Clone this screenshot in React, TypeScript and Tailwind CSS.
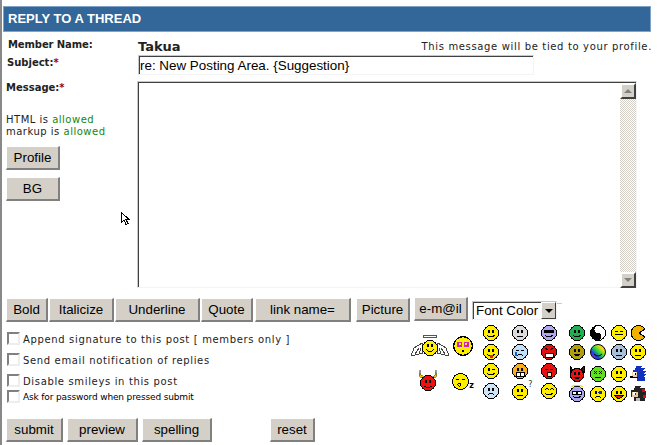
import type { ReactNode } from "react"

const btn =
  "h-[24px] flex items-center justify-center bg-[#d4d0c8] border-t border-l border-r-2 border-b-2 border-t-white border-l-white border-r-[#808080] border-b-[#808080] text-[13.33px] text-black font-['Liberation_Sans',sans-serif]"

const label = "text-[10px] font-bold text-[#222] font-['DejaVu_Sans',sans-serif] leading-[14px]"
const small = "text-[10px] tracking-[0.5px] text-[#222] font-['DejaVu_Sans',sans-serif] leading-[12px]"
const inset =
  "bg-white border border-[#c8c8c8] border-r-[#f4f4f4] border-b-[#f4f4f4] shadow-[inset_1px_1px_0_#404040]"

function Face({ fill, size = 16, children }: { fill: string; size?: number; children?: ReactNode }) {
  return (
    <svg width={size} height={size} viewBox="0 0 16 16" shapeRendering="crispEdges" className="block">
      <circle cx="8" cy="8" r="7.5" fill={fill} stroke="#000" strokeWidth="1" />
      {children}
    </svg>
  )
}

const Eyes = () => (
  <>
    <rect x="5" y="5" width="2" height="3" fill="#000" />
    <rect x="9" y="5" width="2" height="3" fill="#000" />
  </>
)
const Smile = () => <path d="M4 10 Q8 14 12 10" fill="none" stroke="#000" />
const Flat = () => <rect x="5" y="11" width="6" height="1" fill="#000" />
const Frown = () => <path d="M5 12 Q8 9 11 12" fill="none" stroke="#000" />
const Closed = () => (
  <>
    <rect x="4" y="6" width="3" height="1" fill="#000" />
    <rect x="9" y="6" width="3" height="1" fill="#000" />
  </>
)

function Col({ children, className }: { children: ReactNode; className: string }) {
  return <div className={`flex flex-col items-center ${className}`}>{children}</div>
}

function Sonic() {
  return (
    <svg width="16" height="16" viewBox="0 0 16 16" shapeRendering="crispEdges" className="block">
      <path d="M6 0h6l-2 2h5l-2 3h3l-2 3h2l-2 3h1v4H7V11H3V4h2z" fill="#1030c0" />
      <rect x="2" y="6" width="5" height="5" fill="#f4d0a0" />
      <rect x="3" y="6" width="3" height="3" fill="#fff" />
      <rect x="5" y="7" width="1" height="2" fill="#000" />
      <rect x="0" y="10" width="3" height="2" fill="#000" />
      <rect x="3" y="11" width="5" height="1" fill="#000" />
    </svg>
  )
}

function Shadow() {
  return (
    <svg width="16" height="16" viewBox="0 0 16 16" shapeRendering="crispEdges" className="block">
      <path d="M5 0h6l-1 2h5l-1 3h2v5h-1v5H4v-4H1V4h3z" fill="#222" />
      <path d="M12 3h3v3h-3zM13 9h3v3h-3z" fill="#d01010" />
      <rect x="2" y="6" width="6" height="5" fill="#e8c8a0" />
      <rect x="3" y="6" width="3" height="3" fill="#fff" />
      <rect x="5" y="7" width="1" height="2" fill="#c00000" />
      <rect x="6" y="12" width="4" height="3" fill="#bbb" />
    </svg>
  )
}

function Angel() {
  return (
    <svg width="38" height="24" viewBox="0 0 38 24" shapeRendering="crispEdges" className="block">
      <ellipse cx="19" cy="2.5" rx="7" ry="1.5" fill="#fff" stroke="#555" />
      <path d="M11 9 L3 14 L0 22 L12 19 Z" fill="#fff" stroke="#444" />
      <path d="M27 9 L35 14 L38 22 L26 19 Z" fill="#fff" stroke="#444" />
      <path d="M4 20 L8 14 M8 20 L10 14 M34 20 L30 14 M30 20 L28 14" stroke="#444" />
      <circle cx="19" cy="14" r="7.5" fill="#ffee00" stroke="#000" />
      <rect x="16" y="10" width="2" height="3" fill="#000" />
      <rect x="20" y="10" width="2" height="3" fill="#000" />
      <path d="M15 15 Q19 20 23 15" fill="none" stroke="#000" />
    </svg>
  )
}

function Devil() {
  return (
    <svg width="20" height="22" viewBox="0 0 20 22" shapeRendering="crispEdges" className="block">
      <path d="M2 0 L1 6 L5 9 L6 7 L3 5 Z M18 0 L19 6 L15 9 L14 7 L17 5 Z" fill="#e8c800" stroke="#333" strokeWidth="0.5" />
      <circle cx="10" cy="13" r="7.5" fill="#ee1111" stroke="#000" />
      <rect x="7" y="10" width="2" height="3" fill="#000" />
      <rect x="11" y="10" width="2" height="3" fill="#000" />
      <path d="M6 16 Q10 19 14 16" fill="none" stroke="#000" />
    </svg>
  )
}

function Smileys() {
  const y = "#ffee00"
  return (
    <div className="flex mt-[3px]">
      <Col className="w-[38px]">
        <div className="mt-[9px]"><Angel /></div>
        <div className="mt-[12px] -ml-[4px]"><Devil /></div>
      </Col>
      <Col className="w-[30px] -ml-[1px]">
        <div className="mt-[11px]">
          <Face fill={y} size={20}>
            <path d="M4 5h3v3h-3zM9 5h3v3h-3z" fill="none" stroke="#d020c0" />
            <rect x="7" y="11" width="2" height="2" fill="#000" />
          </Face>
        </div>
        <div className="mt-[17px] flex items-end">
          <Face fill={y} size={17}>
            <Closed />
            <circle cx="7" cy="11" r="1.5" fill="none" stroke="#000" />
          </Face>
          <span className="text-[8px] font-bold leading-[8px] font-['DejaVu_Sans',sans-serif]">z</span>
        </div>
      </Col>
      <Col className="w-[29px] gap-[3px] -ml-[2px]">
        <Face fill={y}><Eyes /><Smile /></Face>
        <Face fill={y}><Eyes /><Smile /><rect x="7" y="11" width="3" height="3" fill="#e02020" /></Face>
        <Face fill={y}><rect x="5" y="5" width="2" height="3" fill="#000" /><rect x="9" y="6" width="3" height="1" fill="#000" /><Smile /></Face>
        <div className="mt-[1px]"><Face fill="#cfe6f8"><Eyes /><Frown /></Face></div>
      </Col>
      <Col className="w-[29px] gap-[3px]">
        <Face fill="#dcdcdc"><Eyes /><Flat /></Face>
        <Face fill="#c0e0f8"><Closed /><Frown /><rect x="3" y="8" width="2" height="4" fill="#1060d0" /></Face>
        <Face fill="#f8b020"><Eyes /><rect x="4" y="9" width="8" height="4" fill="#fff" stroke="#000" /><path d="M8 9v4" stroke="#000" /></Face>
        <div className="relative mt-[2px]">
          <Face fill={y}><Eyes /><Flat /></Face>
          <span className="absolute -top-[4px] -right-[5px] text-[8px] leading-[9px] text-[#333] font-['DejaVu_Sans',sans-serif]">?</span>
        </div>
      </Col>
      <Col className="w-[29px] gap-[3px]">
        <Face fill="#b0a8f0"><rect x="3" y="5" width="10" height="3" fill="#000" /><Smile /></Face>
        <Face fill="#e01010"><path d="M4 4l3 2M12 4l-3 2" stroke="#000" /><rect x="4" y="9" width="8" height="4" fill="#fff" stroke="#000" /></Face>
        <Face fill="#e81010"><Closed /><rect x="6" y="9" width="4" height="4" fill="#ffe0a0" stroke="#000" /></Face>
        <div className="mt-[1px]"><Face fill={y}><path d="M4 7l2-2 2 2M9 7l2-2 2 2" fill="none" stroke="#000" /><Smile /></Face></div>
      </Col>
      <Col className="w-[20px] gap-[3px] ml-[4px]">
        <Face fill="#20b050"><Eyes /><Smile /></Face>
        <Face fill="#b0a010"><Eyes /><path d="M4 10 Q8 15 12 10 Z" fill="#000" /></Face>
        <div className="mt-[3px]">
          <svg width="16" height="16" viewBox="0 0 16 16" shapeRendering="crispEdges" className="block">
            <path d="M1 0 L1 6 L4 4 Z M15 0 L15 6 L12 4 Z" fill="#800000" stroke="#000" />
            <circle cx="8" cy="9" r="6.5" fill="#e81010" stroke="#000" />
            <rect x="5" y="6" width="2" height="3" fill="#000" />
            <rect x="9" y="6" width="2" height="3" fill="#000" />
            <path d="M4 11 Q8 15 12 11 Z" fill="#000" />
          </svg>
        </div>
        <div className="relative mt-[1px]">
          <Face fill="#a8a8f0"><circle cx="5.5" cy="7" r="2" fill="#fff" stroke="#000" /><circle cx="10.5" cy="7" r="2" fill="#fff" stroke="#000" /><Smile /></Face>
          <span className="absolute -top-[1px] left-[2px] w-[12px] h-[3px] rounded-[50%] border border-[#e8d000]" />
        </div>
      </Col>
      <Col className="w-[21px] gap-[3px]">
        <Face fill="#fff"><path d="M8 1a7 7 0 0 0 0 14 3.5 3.5 0 0 0 0-7 3.5 3.5 0 0 1 0-7z" fill="#000" /></Face>
        <svg width="16" height="16" viewBox="0 0 16 16" className="block">
          <defs>
            <linearGradient id="rainbow" x1="0" y1="1" x2="1" y2="0">
              <stop offset="0" stopColor="#e010d0" />
              <stop offset="0.3" stopColor="#2040f0" />
              <stop offset="0.5" stopColor="#20d040" />
              <stop offset="0.75" stopColor="#f0e010" />
              <stop offset="1" stopColor="#f02010" />
            </linearGradient>
          </defs>
          <circle cx="8" cy="8" r="7.5" fill="url(#rainbow)" stroke="#000" />
          <Smile />
        </svg>
        <div className="mt-[3px]">
          <Face fill="#60e020"><path d="M4 5l3 3M7 5l-3 3M9 5l3 3M12 5l-3 3" stroke="#000" /><Flat /></Face>
        </div>
        <div className="mt-[1px]">
          <Face fill={y}><rect x="5" y="5" width="2" height="3" fill="#000" /><circle cx="10.5" cy="6.5" r="2" fill="#1030a0" /><Frown /></Face>
        </div>
      </Col>
      <Col className="w-[21px] gap-[3px]">
        <Face fill={y}><path d="M4 6h3M9 6h3" stroke="#000" /><rect x="4" y="9" width="8" height="1" fill="#000" /></Face>
        <Face fill="#a8c0d8"><Eyes /><Flat /></Face>
        <div className="mt-[3px]"><Face fill={y}><Eyes /><Flat /></Face></div>
        <div className="mt-[1px]">
          <Face fill={y}><Eyes /><path d="M3 9 Q8 16 13 9 Z" fill="#e02020" stroke="#000" /></Face>
        </div>
      </Col>
      <Col className="w-[17px] gap-[3px]">
        <svg width="16" height="16" viewBox="0 0 16 16" shapeRendering="crispEdges" className="block">
          <path d="M15 4 A7.5 7.5 0 1 0 15 12 L9 8 Z" fill="#f0b000" stroke="#000" />
        </svg>
        <Face fill={y}><Eyes /><Flat /></Face>
        <div className="mt-[3px]"><Sonic /></div>
        <div className="mt-[1px]"><Shadow /></div>
      </Col>
    </div>
  )
}

function CheckRow({ text, className, narrow }: { text: string; className: string; narrow?: boolean }) {
  return (
    <div className={`flex items-start ${className}`}>
      <span className="w-[13px] h-[13px] shrink-0 bg-white border-2 border-t-[#808080] border-l-[#808080] border-r-[#eeeeee] border-b-[#eeeeee]" />
      {narrow ? (
        <span className="ml-[3px] mt-[1px] text-[9px] tracking-[-0.15px] leading-[12px] text-black font-['DejaVu_Sans',sans-serif] whitespace-nowrap">{text}</span>
      ) : (
        <span className={`ml-[3px] mt-[2px] ${small} tracking-[0.65px] whitespace-nowrap`}>{text}</span>
      )}
    </div>
  )
}

export default function App() {
  return (
    <div className="w-[659px] h-[445px] flex bg-white overflow-hidden">
      <div className="w-[2px] bg-[#888888]" />
      <div className="flex-1 pt-[6px]">
        <div className="w-[648px] h-[26px] ml-[1px] flex items-center pl-[4px] bg-[#336699] border border-[#7fa3c7] text-white text-[13px] font-bold font-['Liberation_Sans',sans-serif]">
          REPLY TO A THREAD
        </div>

        <div className="flex h-[266px]">
          <div className="relative w-[135px]">
            <div className={`${label} ml-[6px] mt-[6px] tracking-[-0.1px]`}>Member Name:</div>
            <div className={`${label} ml-[5px] mt-[4px]`}>
              Subject:<span className="text-[#a00000]">*</span>
            </div>
            <div className={`${label} ml-[4px] mt-[11px]`}>
              Message:<span className="text-[#a00000]">*</span>
            </div>
            <div className={`${small} ml-[4px] mt-[19px]`}>
              HTML is <span className="text-[#118811]">allowed</span>
              <br />
              markup is <span className="text-[#118811]">allowed</span>
            </div>
            <div className={`${btn} w-[54px] ml-[4px] mt-[8px]`}>Profile</div>
            <div className={`${btn} w-[54px] ml-[4px] mt-[7px]`}>BG</div>
            <svg width="9" height="14" viewBox="0 0 9 14" shapeRendering="crispEdges" className="absolute left-[119px] top-[180px]">
              <path d="M0.5 0.5V10L3 8L5 12.5L7 11.5L5 7.5H8Z" fill="#fff" stroke="#000" />
            </svg>
          </div>

          <div className="w-[515px]">
            <div className="h-[23px] flex items-end justify-between leading-none pl-[1px]">
              <span className="text-[13px] font-bold text-[#222] font-['DejaVu_Sans',sans-serif] mb-[2px]">Takua</span>
              <span className="text-[10px] tracking-[0.65px] text-[#222] font-['DejaVu_Sans',sans-serif] mb-[3px]">This message will be tied to your profile.</span>
            </div>
            <div className={`w-[396px] h-[20px] ml-[1px] flex items-center pl-[1px] pt-[3px] ${inset} text-[13.4px] text-black font-['Liberation_Sans',sans-serif] whitespace-nowrap`}>
              re: New Posting Area. {"{Suggestion}"}
            </div>
            <div className={`w-[500px] h-[207px] mt-[6px] flex justify-end ${inset}`}>
              <div className="w-[16px] h-full flex flex-col justify-between bg-[conic-gradient(#d4d0c8_25%,#fff_0_50%,#d4d0c8_0_75%,#fff_0)] bg-[length:2px_2px] mt-[1px]">
                <div className="h-[16px] flex items-center justify-center bg-[#d4d0c8] border-2 border-t-white border-l-white border-r-[#404040] border-b-[#404040]">
                  <span className="w-0 h-0 border-x-[4px] border-x-transparent border-b-[4px] border-b-[#808080]" />
                </div>
                <div className="h-[16px] flex items-center justify-center bg-[#d4d0c8] border-2 border-t-white border-l-white border-r-[#404040] border-b-[#404040]">
                  <span className="w-0 h-0 border-x-[4px] border-x-transparent border-t-[4px] border-t-[#808080]" />
                </div>
              </div>
            </div>
          </div>
        </div>

        <div className="flex items-start ml-[4px]">
          <div className={`${btn} w-[42px]`}>Bold</div>
          <div className={`${btn} w-[65px] ml-[1px]`}>Italicize</div>
          <div className={`${btn} w-[85px] ml-[1px]`}>Underline</div>
          <div className={`${btn} w-[52px] ml-[1px]`}>Quote</div>
          <div className={`${btn} w-[96px] ml-[2px]`}>link name=</div>
          <div className={`${btn} w-[54px] ml-[5px]`}>Picture</div>
          <div className={`${btn} w-[54px] ml-[4px] -mt-[1px]`}>e-m@il</div>
          <div className={`ml-[4px] mt-[3px] w-[85px] h-[19px] flex items-stretch justify-between ${inset} border-r-[#808080] border-b-[#808080] pl-[3px]`}>
            <span className="text-[13.33px] leading-[17px] text-black font-['Liberation_Sans',sans-serif] whitespace-nowrap">Font Color</span>
            <div className="w-[15px] flex items-center justify-center bg-[#d4d0c8] border border-t-white border-l-white border-r-[#404040] border-b-[#404040]">
              <span className="w-0 h-0 border-x-[4px] border-x-transparent border-t-[4px] border-t-black" />
            </div>
          </div>
          <div className="w-[5px] h-[1px] mt-[5px] bg-[#cccccc]" />
        </div>

        <div className="flex">
          <div className="w-[404px] ml-[5px]">
            <CheckRow text="Append signature to this post [ members only ]" className="mt-[10px]" />
            <CheckRow text="Send email notification of replies" className="mt-[7px]" />
            <CheckRow text="Disable smileys in this post" className="mt-[7px]" />
            <CheckRow text="Ask for password when pressed submit" className="mt-[2px]" narrow />
            <div className="flex mt-[15px] -ml-[1px]">
              <div className={`${btn} w-[57px]`}>submit</div>
              <div className={`${btn} w-[71px] ml-[4px]`}>preview</div>
              <div className={`${btn} w-[70px] ml-[4px]`}>spelling</div>
              <div className={`${btn} w-[45px] ml-[58px]`}>reset</div>
            </div>
          </div>
          <Smileys />
        </div>
      </div>
    </div>
  )
}
